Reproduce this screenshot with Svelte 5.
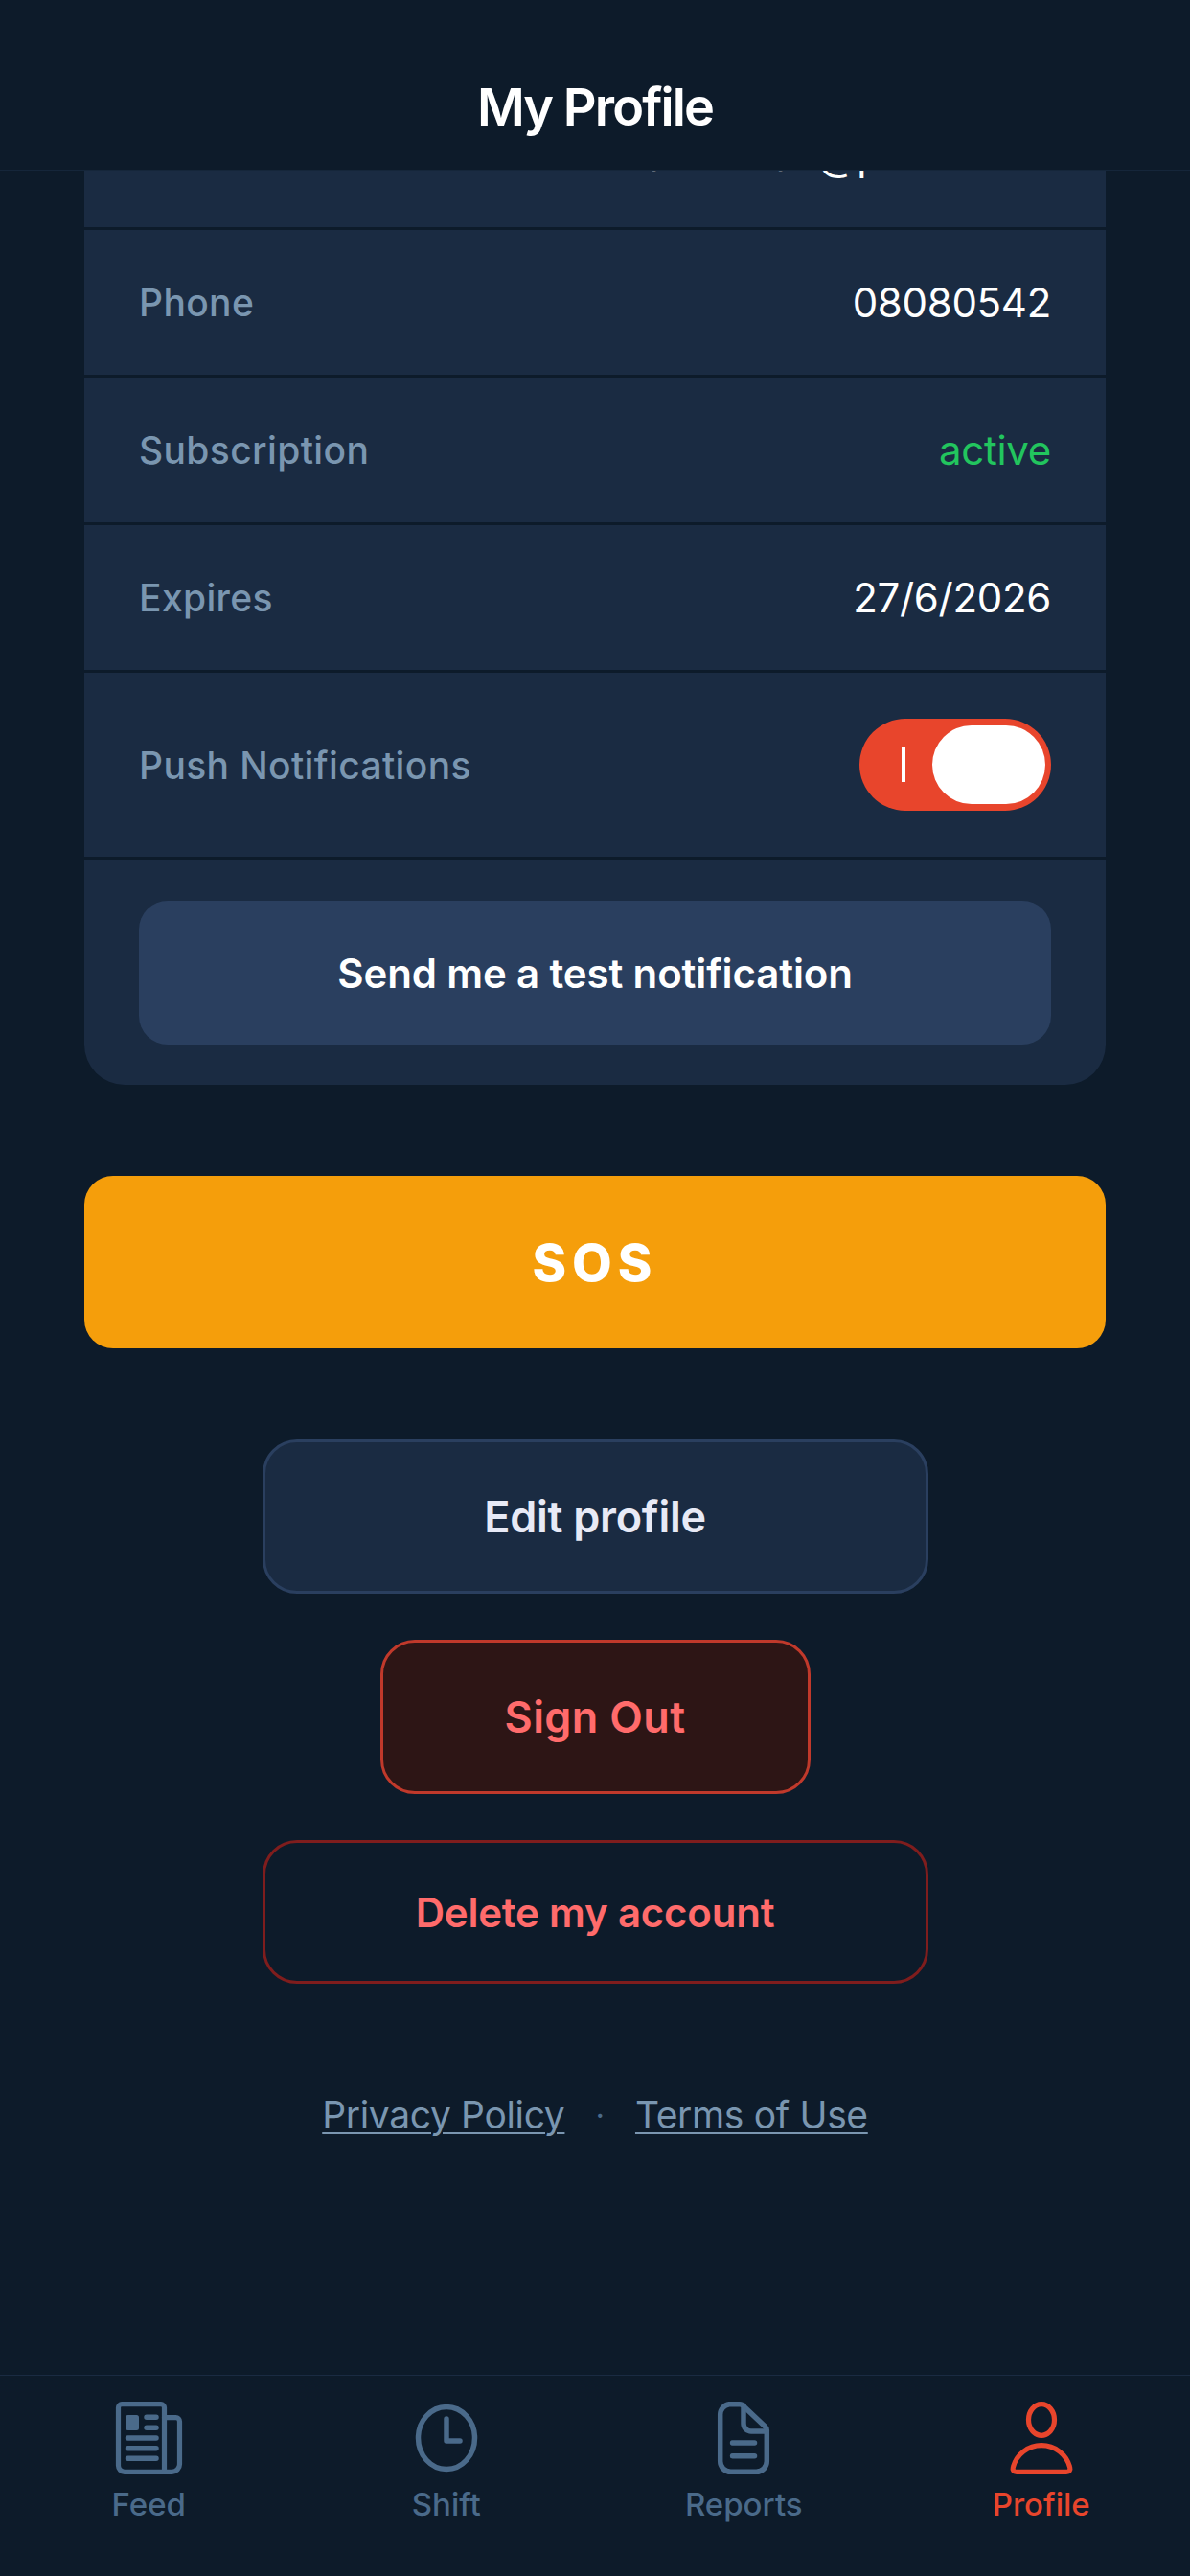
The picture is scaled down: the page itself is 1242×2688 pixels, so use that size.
<script>
  const rows = [
    { label: 'Phone', value: '08080542' },
    { label: 'Subscription', value: 'active', cls: 'ok' },
    { label: 'Expires', value: '27/6/2026' }
  ];
</script>

<div class="app">
  <header class="top"><h1>My Profile</h1></header>
  <main class="scroll">
    <section class="card">
      <div class="clipped"><span>hansen.ab@proton.me</span></div>
      {#each rows as r}
        <div class="row">
          <span class="label">{r.label}</span>
          <span class="value {r.cls ?? ''}">{r.value}</span>
        </div>
      {/each}
      <div class="row push">
        <span class="label">Push Notifications</span>
        <div class="toggle"><i class="mark"></i><i class="thumb"></i></div>
      </div>
      <div class="test-wrap"><button class="test">Send me a test notification</button></div>
    </section>
    <button class="sos">SOS</button>
    <div class="actions">
      <button class="edit">Edit profile</button>
      <button class="signout">Sign Out</button>
      <button class="delete">Delete my account</button>
    </div>
    <div class="links">
      <a href="#privacy">Privacy Policy</a>
      <span class="dot">·</span>
      <a href="#terms">Terms of Use</a>
    </div>
  </main>
  <nav class="tabs">
    <div class="tab">
      <svg viewBox="0 0 72 78" width="72" height="78" fill="none" stroke="currentColor" stroke-width="5.2" stroke-linejoin="round" stroke-linecap="round">
        <path d="M8 3.7h41a3.5 3.5 0 0 1 3.5 3.5v67.1H11a6.5 6.5 0 0 1-6.5-6.5V7.2A3.5 3.5 0 0 1 8 3.7z"/>
        <path d="M52.5 17.7h12a4 4 0 0 1 4 4v44.6a8 8 0 0 1-8 8h-8"/>
        <rect x="12" y="15" width="14" height="16" rx="2.5" fill="currentColor" stroke="none"/>
        <path d="M34 17.3h10M34 28.3h10M14.5 39h29.5M14.5 49.7h29.5M14.5 60.3h29.5" stroke-width="5.5"/>
      </svg>
      <span>Feed</span>
    </div>
    <div class="tab">
      <svg viewBox="0 0 72 78" width="72" height="78" fill="none" stroke="currentColor" stroke-width="5.5" stroke-linejoin="round" stroke-linecap="round">
        <ellipse cx="36" cy="39" rx="29.5" ry="32.5"/>
        <path d="M36 19v23h14"/>
      </svg>
      <span>Shift</span>
    </div>
    <div class="tab">
      <svg viewBox="0 0 72 78" width="72" height="78" fill="none" stroke="currentColor" stroke-width="5.5" stroke-linejoin="round" stroke-linecap="round">
        <path d="M21 3.7h11a5 5 0 0 1 4 2L58.5 27a6 6 0 0 1 1.8 5v31a11 11 0 0 1-11 11.3H22.7a11 11 0 0 1-11-11.3V14.7a11 11 0 0 1 9.3-11z"/>
        <path d="M36 5v19a8 8 0 0 0 8 8h16"/>
        <path d="M24.5 44h23M24.5 57.7h23"/>
      </svg>
      <span>Reports</span>
    </div>
    <div class="tab active">
      <svg viewBox="0 0 72 78" width="72" height="78" fill="none" stroke="currentColor" stroke-width="5.2" stroke-linejoin="round" stroke-linecap="round">
        <ellipse cx="36" cy="20" rx="13.5" ry="16.3"/>
        <path d="M10 74.3c-3 0-4.5-2-3.6-5C10 56 22 46.7 36 46.7S62 56 65.6 69.3c.9 3-.6 5-3.6 5z"/>
      </svg>
      <span>Profile</span>
    </div>
  </nav>
</div>

<style>
  :global(body) { margin: 0; background: #0d1b2a; }
  .app {
    width: 1242px; height: 2688px; display: flex; flex-direction: column;
    background: #0d1b2a; font-family: Inter, "Noto Sans", sans-serif; overflow: hidden;
  }
  .top {
    height: 178px; flex: none; box-sizing: border-box; background: #0d1b2a;
    border-bottom: 1px solid #15263a; display: flex; align-items: flex-end; justify-content: center;
    padding-bottom: 34px;
  }
  h1 { margin: 0; font-size: 54px; line-height: 62px; font-weight: 600; color: #fff; letter-spacing: -1.9px; }
  .scroll { flex: 1; overflow: hidden; display: flex; flex-direction: column; align-items: center; min-height: 0; }
  .card {
    width: 1066px; flex: none; background: #1a2b42; border-radius: 0 0 42px 42px; overflow: hidden;
    display: flex; flex-direction: column;
  }
  .clipped {
    height: 59px; border-bottom: 3px solid #0d1b2a; position: relative; overflow: hidden;
    text-align: right; padding-right: 57px; color: #fff; font-size: 42px; line-height: 50px;
  }
  .clipped span { display: block; margin-top: -40px; }
  .row {
    height: 151px; border-bottom: 3px solid #0d1b2a; display: flex; align-items: center;
    justify-content: space-between; padding: 0 57px;
  }
  .push { height: 192px; }
  .label { font-size: 39px; font-weight: 500; color: #7a96b0; letter-spacing: .36px; }
  .value { font-size: 42px; color: #fff; letter-spacing: -.3px; }
  .ok { color: #22c55e; }
  .toggle {
    width: 200px; height: 96px; border-radius: 48px; background: #e8452c; position: relative;
  }
  .mark { position: absolute; left: 44px; top: 30px; width: 4px; height: 36px; background: #fff; }
  .thumb { position: absolute; left: 76px; top: 7px; width: 118px; height: 82px; border-radius: 41px; background: #fff; }
  .test-wrap { padding: 43px 57px 42px; }
  button { font-family: inherit; display: block; box-sizing: border-box; }
  .test {
    width: 100%; height: 150px; border: 0; border-radius: 30px; background: #2a3f5f;
    color: #fff; font-size: 42px; font-weight: 600; letter-spacing: -.13px;
  }
  .sos {
    margin-top: 95px; width: 1066px; height: 180px; flex: none; border: 0; border-radius: 30px;
    background: #f59e0b; color: #fff; font-size: 54px; font-weight: 800; letter-spacing: 6px;
  }
  .actions { margin-top: 95px; display: flex; flex-direction: column; align-items: center; gap: 48px; }
  .edit {
    width: 695px; height: 161px; border-radius: 36px; border: 3px solid #2a3f5f; background: #1a2b42;
    color: #e8eaf6; font-size: 45px; font-weight: 600; letter-spacing: -.25px;
  }
  .signout {
    width: 449px; height: 161px; border-radius: 36px; border: 3px solid #c0392b; background: #2d1515;
    color: #ff6b6b; font-size: 45px; font-weight: 600; letter-spacing: .35px;
  }
  .delete {
    width: 695px; height: 150px; border-radius: 36px; border: 3px solid #7f1d1d; background: transparent;
    color: #ff6b6b; font-size: 42px; font-weight: 600; letter-spacing: -.2px;
  }
  .links {
    margin-top: 113px; display: flex; align-items: center; justify-content: center; gap: 30px;
    font-size: 39px; line-height: 48px; color: #7a96b0;
  }
  .links a { color: #7a96b0; text-decoration: underline; text-underline-offset: 4px; text-decoration-thickness: 2px; letter-spacing: -.35px; }
  .dot { color: #4a6a8a; font-size: 33px; padding: 0 2px; }
  .tabs {
    height: 210px; flex: none; box-sizing: border-box; border-top: 1px solid #1a2b42; background: #0d1b2a;
    display: grid; grid-template-columns: repeat(4, 1fr); padding: 26px 0 0 0;
  }
  .tab {
    display: flex; flex-direction: column; align-items: center; color: #4a6a8a;
    font-size: 33px; font-weight: 500;
  }
  .tab svg { display: block; margin-bottom: 10px; }
  .tab span { line-height: 40px; }
  .active { color: #e8452c; }
</style>
